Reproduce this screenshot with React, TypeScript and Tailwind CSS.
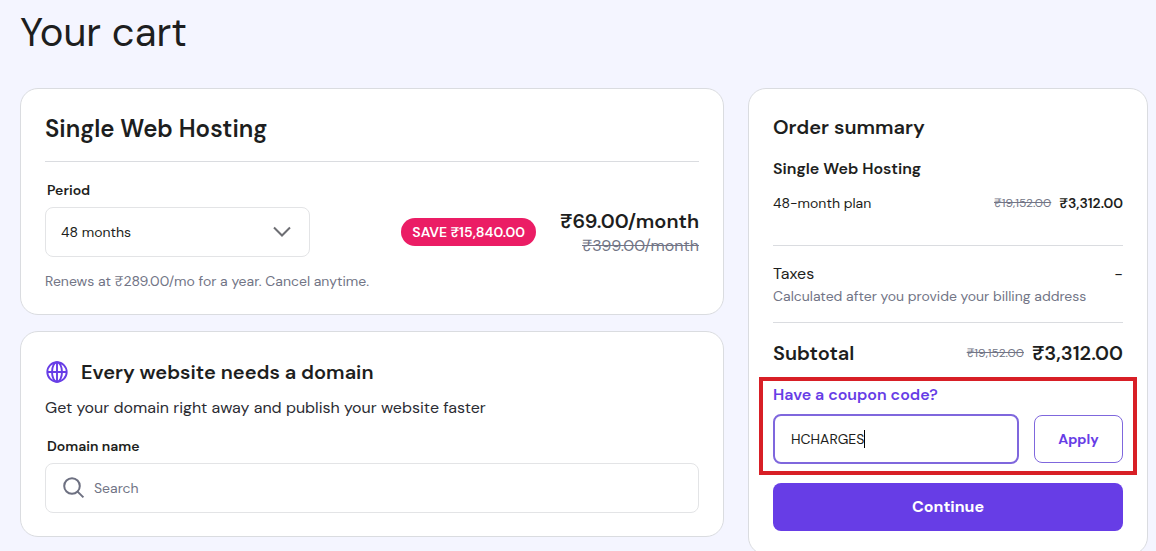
import { useState } from "react";
import type { ReactNode } from "react";

const periods = ["48 months", "24 months", "12 months", "1 month"];

export default function App() {
  return (
    <main className="min-h-screen bg-[#f4f5ff] pl-5 pr-2 pt-2 font-['DM_Sans',Inter,sans-serif] text-[#1d1e20]">
      <h1 className="text-[40px] leading-12">Your cart</h1>
      <div className="mt-8 grid grid-cols-[minmax(0,1fr)_400px] items-start gap-6">
        <div className="flex flex-col gap-4">
          <PlanCard />
          <DomainCard />
        </div>
        <OrderSummary />
      </div>
    </main>
  );
}

function Card({ children }: { children: ReactNode }) {
  return (
    <section className="rounded-[18px] border border-[#dadce0] bg-white px-6 pb-[23px] pt-6">
      {children}
    </section>
  );
}

function PlanCard() {
  const [period, setPeriod] = useState(periods[0]);

  return (
    <Card>
      <h2 className="border-b border-[#dadce0] pb-4 text-2xl font-semibold leading-8">
        Single Web Hosting
      </h2>
      <label htmlFor="period" className="mt-[18px] block pl-0.5 text-sm font-semibold leading-5">
        Period
      </label>
      <div className="mt-[7px] flex items-center">
        <div className="relative w-[265px]">
          <select
            id="period"
            value={period}
            onChange={(e) => setPeriod(e.target.value)}
            className="h-[50px] w-full appearance-none rounded-lg border border-[#e3e4e6] bg-white px-[15px] text-sm"
          >
            {periods.map((p) => (
              <option key={p}>{p}</option>
            ))}
          </select>
          <ChevronIcon />
        </div>
        <span className="ml-auto rounded-full bg-[#eb1d65] px-[11px] py-1 text-sm font-semibold leading-5 text-white">
          SAVE ₹15,840.00
        </span>
        <div className="ml-6 text-right">
          <p className="text-xl font-semibold leading-7">₹69.00/month</p>
          <p className="leading-[22px] text-[#727586] line-through">₹399.00/month</p>
        </div>
      </div>
      <p className="mt-3.5 text-sm leading-5 text-[#727586]">
        Renews at ₹289.00/mo for a year. Cancel anytime.
      </p>
    </Card>
  );
}

function DomainCard() {
  return (
    <Card>
      <div className="flex items-center gap-3">
        <GlobeIcon />
        <h2 className="text-xl font-semibold leading-8">Every website needs a domain</h2>
      </div>
      <p className="mt-2 leading-6 text-[#2b2c33]">
        Get your domain right away and publish your website faster
      </p>
      <label htmlFor="domain" className="mt-4 block pl-0.5 text-sm font-semibold leading-5">
        Domain name
      </label>
      <div className="mt-[7px] flex h-[50px] items-center gap-2 rounded-lg border border-[#e3e4e6] px-4">
        <SearchIcon />
        <input
          id="domain"
          type="text"
          placeholder="Search"
          className="min-w-0 flex-1 text-sm outline-none placeholder:text-[#727586]"
        />
      </div>
    </Card>
  );
}

function OrderSummary() {
  const [coupon, setCoupon] = useState("HCHARGES");

  return (
    <Card>
      <h2 className="text-xl font-semibold leading-7">Order summary</h2>
      <h3 className="mt-4 font-semibold leading-6">Single Web Hosting</h3>
      <div className="mt-3 flex items-center justify-between border-b border-[#dadce0] pb-8 text-sm leading-5">
        <span>48-month plan</span>
        <span className="flex items-center gap-2">
          <s className="text-xs text-[#727586]">₹19,152.00</s>
          <span className="font-semibold">₹3,312.00</span>
        </span>
      </div>
      <div className="border-b border-[#dadce0] py-4">
        <div className="flex justify-between leading-6">
          <span>Taxes</span>
          <span>-</span>
        </div>
        <p className="text-sm leading-5 text-[#727586]">
          Calculated after you provide your billing address
        </p>
      </div>
      <div className="mt-4 flex items-center justify-between text-xl font-semibold leading-7">
        <span>Subtotal</span>
        <span className="flex items-center gap-2">
          <s className="text-xs font-normal text-[#727586]">₹19,152.00</s>
          <span>₹3,312.00</span>
        </span>
      </div>
      <div className="-mx-[14px] mt-[10px] border-4 border-[#d81f26] px-[10px] pb-[7px] pt-[2px]">
        <label htmlFor="coupon" className="block font-semibold leading-6 text-[#673de6]">
          Have a coupon code?
        </label>
        <div className="mt-[7px] flex items-center gap-[15px]">
          <div className="flex h-[50px] flex-1 items-center rounded-lg border-2 border-[#7f67dd] px-4">
            <input
              id="coupon"
              type="text"
              value={coupon}
              onChange={(e) => setCoupon(e.target.value)}
              className="field-sizing-content text-sm caret-transparent outline-none"
            />
            <span className="h-[18px] w-px bg-black" />
          </div>
          <button
            type="button"
            className="h-12 w-[89px] rounded-lg border border-[#7f67dd] text-sm font-bold text-[#673de6]"
          >
            Apply
          </button>
        </div>
      </div>
      <button
        type="button"
        className="mt-2 h-12 w-full rounded-lg bg-[#673de6] font-bold text-white"
      >
        Continue
      </button>
    </Card>
  );
}

function ChevronIcon() {
  return (
    <svg
      className="pointer-events-none absolute right-[19px] top-[19px] h-3 w-[18px]"
      viewBox="0 0 18 12"
      fill="none"
      stroke="#6d6e73"
      strokeWidth="2"
      aria-hidden="true"
    >
      <path d="M1 1.5 9 9.5 17 1.5" />
    </svg>
  );
}

function GlobeIcon() {
  return (
    <svg
      className="size-6"
      viewBox="0 0 24 24"
      fill="none"
      stroke="#673de6"
      strokeWidth="1.9"
      aria-hidden="true"
    >
      <circle cx="12" cy="12" r="9.7" />
      <ellipse cx="12" cy="12" rx="5" ry="9.7" />
      <path d="M12 2.3v19.4M2.3 12h19.4" />
    </svg>
  );
}

function SearchIcon() {
  return (
    <svg
      className="size-6"
      viewBox="0 0 24 24"
      fill="none"
      stroke="#6d7081"
      strokeWidth="2"
      aria-hidden="true"
    >
      <circle cx="10" cy="10" r="7.8" />
      <path d="m15.6 15.6 5.8 5.8" />
    </svg>
  );
}
